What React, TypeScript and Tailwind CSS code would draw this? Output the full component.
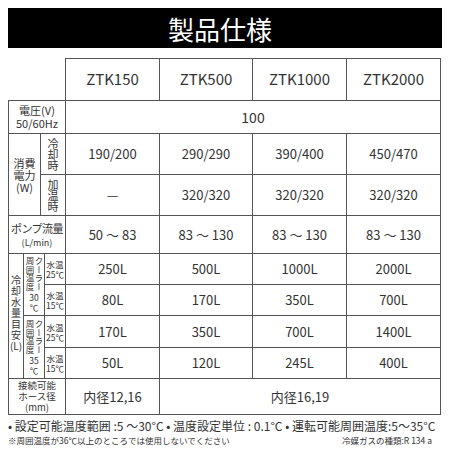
import React from "react";

const cell = "flex items-center justify-center border-r border-b border-[#555] text-center";

function Vert({ text, className = "" }: { text: string; className?: string }) {
  return <div className={"[writing-mode:vertical-rl] " + className}>{text}</div>;
}

function Ambient({ t }: { t: string }) {
  return (
    <div className="flex flex-col items-center text-[8.5px] leading-[9px]">
      <div className="flex flex-row-reverse">
        <Vert text="クーラー" className="w-[9px]" />
        <Vert text="周囲温度" className="w-[9px]" />
      </div>
      <div className="mt-[1px] whitespace-pre-line leading-[10px]">{t + "\n℃"}</div>
    </div>
  );
}

function Water({ t }: { t: string }) {
  return (
    <div className="whitespace-pre-line text-[8.5px] leading-[10px]">{"水温\n" + t + "℃"}</div>
  );
}

export default function App() {
  const v = "text-[13px]";
  return (
    <div
      className="w-[450px] h-[450px] bg-white pt-2 text-[#333]"
      style={{ fontFamily: '"Noto Sans CJK JP", "Noto Sans", sans-serif' }}
    >
      <div className="mx-2 flex h-10 items-center justify-center bg-black pr-[10px] text-[26px] text-white">
        製品仕様
      </div>

      <div className="ml-2 mt-[10px] grid w-[433px] grid-cols-[16px_17px_4px_21px_94px_93px_94px_94px] grid-rows-[43px_33px_41px_41px_38px_31px_31px_32px_31px_36px]">
        {/* header */}
        <div className="col-start-1 col-span-4 row-start-1 border-r border-b border-[#555]" />
        <div className={cell + " col-start-5 row-start-1 border-t text-[15px]"}>ZTK150</div>
        <div className={cell + " col-start-6 row-start-1 border-t text-[15px]"}>ZTK500</div>
        <div className={cell + " col-start-7 row-start-1 border-t text-[15px]"}>ZTK1000</div>
        <div className={cell + " col-start-8 row-start-1 border-t text-[15px]"}>ZTK2000</div>

        {/* voltage */}
        <div className={cell + " col-start-1 col-span-4 row-start-2 border-l whitespace-pre-line text-[11px] leading-[13px]"}>
          {"電圧(V)\n50/60Hz"}
        </div>
        <div className={cell + " col-start-5 col-span-4 row-start-2 text-[14px]"}>100</div>

        {/* consumption */}
        <div className={cell + " col-start-1 col-span-2 row-start-3 row-span-2 border-l whitespace-pre-line text-[11px] leading-[12px]"}>
          {"消費\n電力\n(W)"}
        </div>
        <div className={cell + " col-start-3 col-span-2 row-start-3"}>
          <Vert text="冷却時" className="text-[11px] leading-[12px]" />
        </div>
        <div className={cell + " col-start-3 col-span-2 row-start-4"}>
          <Vert text="加温時" className="text-[11px] leading-[12px]" />
        </div>
        <div className={cell + " col-start-5 row-start-3 " + v}>190/200</div>
        <div className={cell + " col-start-6 row-start-3 " + v}>290/290</div>
        <div className={cell + " col-start-7 row-start-3 " + v}>390/400</div>
        <div className={cell + " col-start-8 row-start-3 " + v}>450/470</div>
        <div className={cell + " col-start-5 row-start-4 " + v}>—</div>
        <div className={cell + " col-start-6 row-start-4 " + v}>320/320</div>
        <div className={cell + " col-start-7 row-start-4 " + v}>320/320</div>
        <div className={cell + " col-start-8 row-start-4 " + v}>320/320</div>

        {/* pump */}
        <div className={cell + " col-start-1 col-span-4 row-start-5 border-l flex-col"}>
          <div className="text-[11px] leading-[16px] tracking-[-0.5px]">ポンプ流量</div>
          <div className="text-[9px] leading-[13px]">(L/min)</div>
        </div>
        <div className={cell + " col-start-5 row-start-5 " + v}>50 ～ 83</div>
        <div className={cell + " col-start-6 row-start-5 " + v}>83 ～ 130</div>
        <div className={cell + " col-start-7 row-start-5 " + v}>83 ～ 130</div>
        <div className={cell + " col-start-8 row-start-5 " + v}>83 ～ 130</div>

        {/* cooling water */}
        <div className={cell + " col-start-1 row-start-6 row-span-4 border-l pb-[8px]"}>
          <div className="whitespace-pre-line text-[10px] leading-[11px]">{"冷\n却\n水\n量\n目\n安\n(L)"}</div>
        </div>
        <div className={cell + " col-start-2 col-span-2 row-start-6 row-span-2"}>
          <Ambient t="30" />
        </div>
        <div className={cell + " col-start-2 col-span-2 row-start-8 row-span-2"}>
          <Ambient t="35" />
        </div>
        <div className={cell + " col-start-4 row-start-6"}><Water t="25" /></div>
        <div className={cell + " col-start-4 row-start-7"}><Water t="15" /></div>
        <div className={cell + " col-start-4 row-start-8"}><Water t="25" /></div>
        <div className={cell + " col-start-4 row-start-9"}><Water t="15" /></div>

        <div className={cell + " col-start-5 row-start-6 " + v}>250L</div>
        <div className={cell + " col-start-6 row-start-6 " + v}>500L</div>
        <div className={cell + " col-start-7 row-start-6 " + v}>1000L</div>
        <div className={cell + " col-start-8 row-start-6 " + v}>2000L</div>
        <div className={cell + " col-start-5 row-start-7 " + v}>80L</div>
        <div className={cell + " col-start-6 row-start-7 " + v}>170L</div>
        <div className={cell + " col-start-7 row-start-7 " + v}>350L</div>
        <div className={cell + " col-start-8 row-start-7 " + v}>700L</div>
        <div className={cell + " col-start-5 row-start-8 " + v}>170L</div>
        <div className={cell + " col-start-6 row-start-8 " + v}>350L</div>
        <div className={cell + " col-start-7 row-start-8 " + v}>700L</div>
        <div className={cell + " col-start-8 row-start-8 " + v}>1400L</div>
        <div className={cell + " col-start-5 row-start-9 " + v}>50L</div>
        <div className={cell + " col-start-6 row-start-9 " + v}>120L</div>
        <div className={cell + " col-start-7 row-start-9 " + v}>245L</div>
        <div className={cell + " col-start-8 row-start-9 " + v}>400L</div>

        {/* hose */}
        <div className={cell + " col-start-1 col-span-4 row-start-10 border-l whitespace-pre-line text-[9.5px] leading-[11px]"}>
          {"接続可能\nホース径\n(mm)"}
        </div>
        <div className={cell + " col-start-5 row-start-10 " + v}>内径12,16</div>
        <div className={cell + " col-start-6 col-span-3 row-start-10 " + v}>内径16,19</div>
      </div>

      <div className="ml-2 mt-[3px] w-[428px] text-[12px] leading-[16px] whitespace-nowrap">
        • 設定可能温度範囲 :5 ～30°C • 温度設定単位 : 0.1°C • 運転可能周囲温度:5～35°C
      </div>
      <div className="ml-2 flex w-[424px] justify-between text-[8.5px] leading-[12px] whitespace-nowrap">
        <span>※周囲温度が36℃以上のところでは使用しないでください</span>
        <span>冷媒ガスの種類:R 134 a</span>
      </div>
    </div>
  );
}
